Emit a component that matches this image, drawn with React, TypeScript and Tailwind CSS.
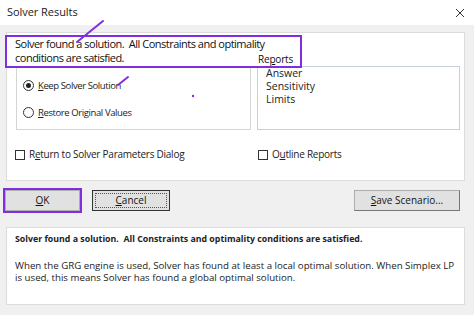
import React from "react";

const font = { fontFamily: '"Open Sans", "Noto Sans", sans-serif' };

function Radio({ checked, label, u }: { checked?: boolean; label: string; u: number }) {
  return (
    <div className="flex items-center gap-[4px] h-[13px]">
      <span className="w-[11px] h-[11px] rounded-full border border-[#333] bg-white flex items-center justify-center">
        {checked && <span className="w-[5px] h-[5px] rounded-full bg-[#222]" />}
      </span>
      <span className="text-[9.5px] tracking-[-0.4px] leading-[13px] text-[#222] whitespace-nowrap">
        <span className="underline">{label.slice(0, u)}</span>
        {label.slice(u)}
      </span>
    </div>
  );
}

function Check({ label, ui }: { label: string; ui: number }) {
  return (
    <div className="flex items-center gap-[4px] h-[13px]">
      <span className="w-[10px] h-[10px] border border-[#333] bg-white" />
      <span className="text-[10px] tracking-[-0.25px] leading-[13px] text-[#222] whitespace-nowrap">
        {label.slice(0, ui)}
        <span className="underline">{label.slice(ui, ui + 1)}</span>
        {label.slice(ui + 1)}
      </span>
    </div>
  );
}

function Btn({ children, cls }: { children: React.ReactNode; cls: string }) {
  return (
    <div className={"h-[21px] bg-[#e1e1e1] flex items-center justify-center text-[10px] text-[#111] " + cls}>
      {children}
    </div>
  );
}

export default function App() {
  return (
    <div className="relative w-[474px] h-[315px] overflow-hidden bg-[#f0f0f0]" style={font}>
      {/* title bar */}
      <div className="h-[25px] bg-white flex items-center justify-between pl-[7px] pr-[9px]">
        <span className="text-[11px] tracking-[-0.05px] text-[#1a1a1a]">Solver Results</span>
        <svg width="10" height="10" viewBox="0 0 10 10">
          <path d="M1 1 L9 9 M9 1 L1 9" stroke="#333" strokeWidth="1" />
        </svg>
      </div>

      {/* main panel */}
      <div className="mt-[7px] ml-[6px] w-[459px] h-[149px] bg-white border border-[#dcdcdc] flex flex-col">
        <div className="flex">
          <div className="w-[244px] pl-[8px] pt-[4px]">
            <div className="text-[11px] tracking-[-0.5px] leading-[14px] text-[#111] whitespace-pre">
              {"Solver found a solution.  All Constraints and optimality"}
              <br />
              {"conditions are satisfied."}
            </div>
            <div className="ml-[1px] mt-[1px] w-[235px] h-[64px] border border-[#d5d5d5] pl-[6px] pt-[12px] flex flex-col gap-[14px]">
              <Radio checked label="Keep Solver Solution" u={1} />
              <Radio label="Restore Original Values" u={1} />
            </div>
          </div>
          <div className="ml-[6px] pt-[19px]">
            <div className="pl-[1px] text-[10px] tracking-[-0.2px] leading-[14px] text-[#111]">
              Re<span className="underline">p</span>orts
            </div>
            <div className="w-[203px] h-[64px] border border-[#c8d0dc] pl-[8px] text-[10.5px] leading-[13px] text-[#222]">
              <div>Answer</div>
              <div>Sensitivity</div>
              <div>Limits</div>
            </div>
          </div>
        </div>
        <div className="flex mt-[18px]">
          <div className="w-[245px] pl-[8px]">
            <Check label="Return to Solver Parameters Dialog" ui={1} />
          </div>
          <div className="pl-[6px]">
            <Check label="Outline Reports" ui={1} />
          </div>
        </div>
      </div>

      {/* buttons */}
      <div className="flex items-center h-[24px] mt-[7px] pl-[3px] pr-[14px]">
        <div className="border-2 border-[#7f2fe0]">
          <Btn cls="w-[75px] h-[20px] border border-[#adadad]">
            <span><span className="underline">O</span>K</span>
          </Btn>
        </div>
        <Btn cls="ml-[10px] w-[78px] border border-[#333] p-[2px]">
          <span className="w-full h-full border border-dotted border-[#555] flex items-center justify-center">
            <span><span className="underline">C</span>ancel</span>
          </span>
        </Btn>
        <div className="flex-1" />
        <Btn cls="w-[106px] border border-[#adadad] border-r-[#777] border-b-[#777]">
          <span><span className="underline">S</span>ave Scenario...</span>
        </Btn>
      </div>

      {/* message panel */}
      <div className="mt-[15px] ml-[6px] w-[459px] h-[78px] bg-white border border-[#dcdcdc] pl-[8px] pt-[5px] text-[#222]">
        <div className="text-[8.8px] leading-[13px] font-bold whitespace-pre">
          {"Solver found a solution.  All Constraints and optimality conditions are satisfied."}
        </div>
        <div className="mt-[14px] text-[9.7px] leading-[12px] whitespace-nowrap">
          When the GRG engine is used, Solver has found at least a local optimal solution. When Simplex LP
          <br />
          is used, this means Solver has found a global optimal solution.
        </div>
      </div>

      {/* annotations */}
      <div className="absolute left-[5px] top-[35px] w-[297px] h-[33px] border-2 border-[#7f2fe0]" />
      <svg className="absolute left-0 top-0" width="474" height="315" viewBox="0 0 474 315">
        <path d="M77 42 L103 21" stroke="#7f2fe0" strokeWidth="2" strokeLinecap="round" />
        <path d="M118 85 L128 77" stroke="#7f2fe0" strokeWidth="2" strokeLinecap="round" />
        <circle cx="193" cy="96" r="1.2" fill="#7f2fe0" />
      </svg>
    </div>
  );
}
